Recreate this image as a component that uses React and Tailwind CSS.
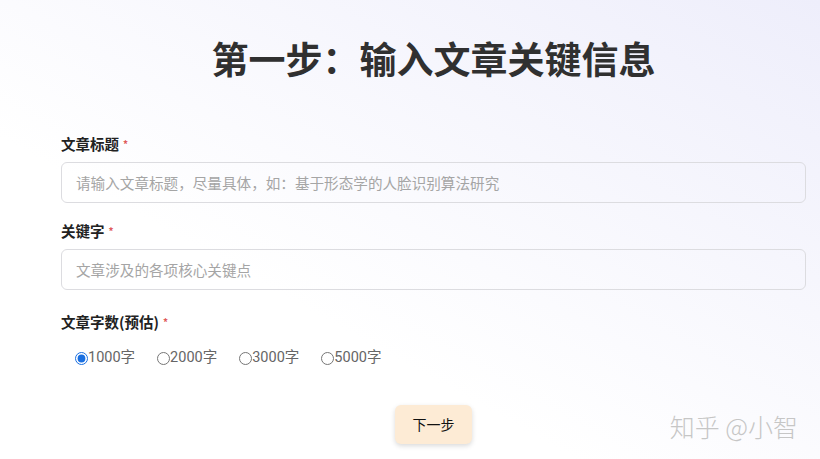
import { useState } from 'react';

const counts = ['1000字', '2000字', '3000字', '5000字'];

function Label({ children }) {
  return (
    <div className="mb-2 flex items-center text-[14.5px] font-bold leading-[20px] text-[#222]">
      {children}
      <span className="ml-[4px] text-[10px] text-[#e05a5a]">*</span>
    </div>
  );
}

export default function App() {
  const [count, setCount] = useState('1000字');

  return (
    <div
      className="relative h-[459px] w-[820px] overflow-hidden bg-[linear-gradient(to_bottom_left,#eeeefb,#ffffff_65%)]"
      style={{ fontFamily: '"Noto Sans CJK SC", "Noto Sans", sans-serif' }}
    >
      <div className="ml-[61px] w-[745px] pt-[36px]">
        <h1 className="text-center text-[37px] font-bold leading-[44px] text-[#303030]">
          第一步：输入文章关键信息
        </h1>

        <div className="mt-[54px]">
          <Label>文章标题</Label>
          <input
            className="h-[41px] w-full rounded-md border border-[#dcdce0] bg-transparent px-[14px] text-[14.6px] text-[#333] outline-none placeholder:text-[#a5a5a5]"
            placeholder="请输入文章标题，尽量具体，如：基于形态学的人脸识别算法研究"
          />
        </div>

        <div className="mt-[18px]">
          <Label>关键字</Label>
          <input
            className="h-[41px] w-full rounded-md border border-[#dcdce0] bg-transparent px-[14px] text-[14.6px] text-[#333] outline-none placeholder:text-[#a5a5a5]"
            placeholder="文章涉及的各项核心关键点"
          />
        </div>

        <div className="mt-[22px]">
          <Label>文章字数(预估)</Label>
          <div className="mt-[16px] flex items-center gap-[22px] pl-[14px] text-[14.5px] leading-[20px] text-[#666]">
            {counts.map((c) => (
              <label key={c} className="flex items-center">
                <input
                  type="radio"
                  name="count"
                  checked={count === c}
                  onChange={() => setCount(c)}
                  className="m-0 h-[13px] w-[13px] accent-[#1a6fe0]"
                />
                <span style={{ fontFamily: 'Roboto, "Noto Sans CJK SC", sans-serif' }}>{c}</span>
              </label>
            ))}
          </div>
        </div>

        <div className="mt-[37px] flex justify-center">
          <button
            type="button"
            className="h-[39px] w-[77px] rounded-md bg-[#fdebd5] text-[14px] text-[#111] shadow-[0_2px_5px_rgba(0,0,0,0.15)]"
          >
            下一步
          </button>
        </div>
      </div>

      <div className="absolute bottom-[17px] right-[22px] text-[25px] font-light leading-[32px] text-[#c6c6c6] [text-shadow:0_0_1px_#fff]">
        知乎 @小智
      </div>
    </div>
  );
}
